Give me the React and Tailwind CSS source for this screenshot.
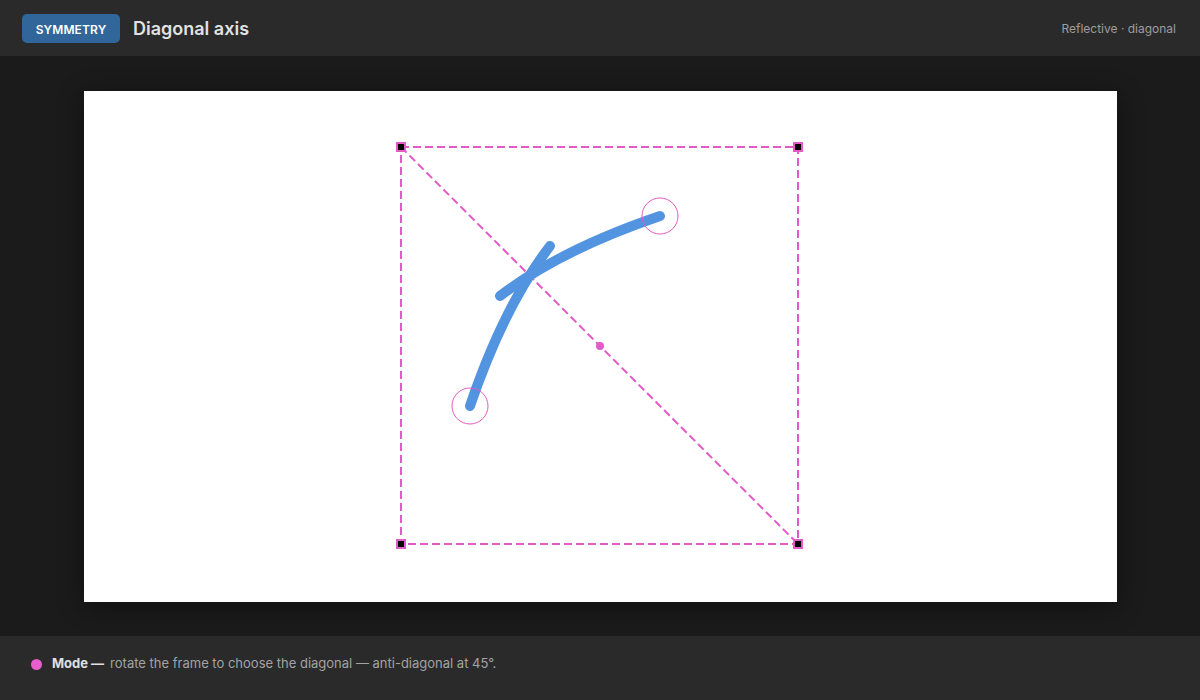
import React from 'react';

const PINK = '#e45ac8';
const BLUE = '#5294e0';

function Handle({ x, y }) {
    return <rect x={x - 4} y={y - 4} width="8" height="8" fill="#000" stroke={PINK} strokeWidth="2" />;
}

export default function App() {
    return (
        <div className="w-[1200px] h-[700px] flex flex-col bg-[#1b1b1b] overflow-hidden" style={{ fontFamily: 'Inter, "Noto Sans", sans-serif' }}>
            <header className="h-14 shrink-0 bg-[#2a2a2a] flex items-center justify-between pl-[22px] pr-6 pt-px">
                <div className="flex items-center gap-[13px]">
                    <span className="inline-flex items-center justify-center w-[98px] h-[29px] pt-[2px] rounded-[5px] bg-[#31669b] text-white text-[12px] font-semibold tracking-[0.01em]">
                        SYMMETRY
                    </span>
                    <h1 className="text-[18px] font-semibold text-[#e2e2e2]">Diagonal axis</h1>
                </div>
                <span className="text-[12px] text-[#9d9d9d] pt-px">Reflective · diagonal</span>
            </header>

            <main className="flex-1 flex items-center justify-center">
                <div className="w-[1033px] h-[511px] bg-white shadow-[0_4px_24px_rgba(0,0,0,0.45)]">
                    <svg width="1033" height="511" viewBox="84 91 1033 511">
                        <g fill="none" stroke={PINK} strokeWidth="2" strokeDasharray="8 4">
                            <rect x="401" y="147" width="397" height="397" />
                            <line x1="401" y1="147" x2="798" y2="544" />
                        </g>
                        <g fill="none" stroke={BLUE} strokeWidth="10" strokeLinecap="round">
                            <path d="M500 296 Q 560 250 660 216" />
                            <path d="M550 246 Q 504 306 470 406" />
                        </g>
                        <circle cx="660" cy="216" r="18" fill="none" stroke={PINK} strokeWidth="1" />
                        <circle cx="470" cy="406" r="18" fill="none" stroke={PINK} strokeWidth="1" />
                        <circle cx="600" cy="346" r="4" fill={PINK} />
                        <Handle x={401} y={147} />
                        <Handle x={798} y={147} />
                        <Handle x={401} y={544} />
                        <Handle x={798} y={544} />
                    </svg>
                </div>
            </main>

            <footer className="h-16 shrink-0 bg-[#2a2a2a] flex items-center pl-[31px] pb-2 gap-[10px] text-[13px]">
                <span className="w-[11px] h-[11px] rounded-full bg-[#e65fcc] shrink-0" />
                <p className="text-[#a3a3a3]">
                    <span className="font-bold text-[#e0e0e0] mr-[6px]">Mode —</span>
                    rotate the frame to choose the diagonal — anti-diagonal at 45°.
                </p>
            </footer>
        </div>
    );
}
